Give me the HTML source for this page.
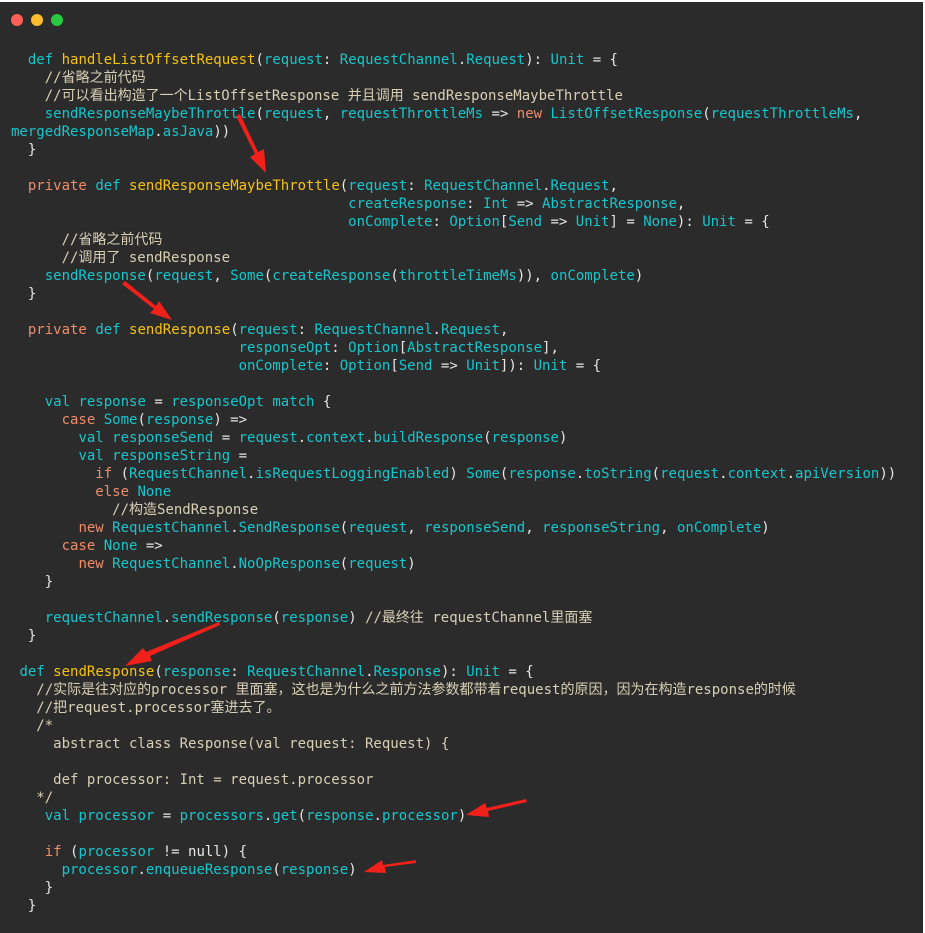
<!DOCTYPE html>
<html><head><meta charset="utf-8"><style>
html,body{margin:0;padding:0;background:#fff;}
#w{position:absolute;left:0;top:2px;width:923px;height:931px;background:#2b2b2b;overflow:hidden;}
.dot{position:absolute;top:12px;width:12px;height:12px;border-radius:50%;}
pre{position:absolute;left:11px;top:49px;margin:0;font-family:"DejaVu Sans Mono","Liberation Mono","Noto Sans CJK SC",monospace;font-size:14px;line-height:18px;color:#e6e6e6;}
.t{color:#16c6cc}.f{color:#f5c20f}.p{color:#ee8d6c}.c{color:#d8cfb4}
svg{position:absolute;left:0;top:-2px;}
</style></head><body><div id="w">
<div class="dot" style="left:11px;background:#fe5f57"></div>
<div class="dot" style="left:31px;background:#febc2e"></div>
<div class="dot" style="left:51px;background:#28c840"></div>
<pre>  <span class="t">def</span> <span class="f">handleListOffsetRequest</span>(<span class="t">request</span>: <span class="t">RequestChannel</span>.<span class="t">Request</span>): <span class="t">Unit</span> = {
    <span class="c">//省略之前代码</span>
    <span class="c">//可以看出构造了一个ListOffsetResponse 并且调用 sendResponseMaybeThrottle</span>
    <span class="t">sendResponseMaybeThrottle</span>(<span class="t">request</span>, <span class="t">requestThrottleMs</span> =&gt; <span class="p">new</span> <span class="t">ListOffsetResponse</span>(<span class="t">requestThrottleMs</span>,
<span class="t">mergedResponseMap</span>.<span class="t">asJava</span>))
  }

  <span class="p">private</span> <span class="t">def</span> <span class="f">sendResponseMaybeThrottle</span>(<span class="t">request</span>: <span class="t">RequestChannel</span>.<span class="t">Request</span>,
                                        <span class="t">createResponse</span>: <span class="t">Int</span> =&gt; <span class="t">AbstractResponse</span>,
                                        <span class="t">onComplete</span>: <span class="t">Option</span>[<span class="t">Send</span> =&gt; <span class="t">Unit</span>] = <span class="t">None</span>): <span class="t">Unit</span> = {
      <span class="c">//省略之前代码</span>
      <span class="c">//调用了 sendResponse</span>
    <span class="t">sendResponse</span>(<span class="t">request</span>, <span class="t">Some</span>(<span class="t">createResponse</span>(<span class="t">throttleTimeMs</span>)), <span class="t">onComplete</span>)
  }

  <span class="p">private</span> <span class="t">def</span> <span class="f">sendResponse</span>(<span class="t">request</span>: <span class="t">RequestChannel</span>.<span class="t">Request</span>,
                           <span class="t">responseOpt</span>: <span class="t">Option</span>[<span class="t">AbstractResponse</span>],
                           <span class="t">onComplete</span>: <span class="t">Option</span>[<span class="t">Send</span> =&gt; <span class="t">Unit</span>]): <span class="t">Unit</span> = {

    <span class="t">val</span> <span class="t">response</span> = <span class="t">responseOpt</span> <span class="t">match</span> {
      <span class="p">case</span> <span class="t">Some</span>(<span class="t">response</span>) =&gt;
        <span class="t">val</span> <span class="t">responseSend</span> = <span class="t">request</span>.<span class="t">context</span>.<span class="t">buildResponse</span>(<span class="t">response</span>)
        <span class="t">val</span> <span class="t">responseString</span> =
          <span class="p">if</span> (<span class="t">RequestChannel</span>.<span class="t">isRequestLoggingEnabled</span>) <span class="t">Some</span>(<span class="t">response</span>.<span class="t">toString</span>(<span class="t">request</span>.<span class="t">context</span>.<span class="t">apiVersion</span>))
          <span class="p">else</span> <span class="t">None</span>
            <span class="c">//构造SendResponse</span>
        <span class="p">new</span> <span class="t">RequestChannel</span>.<span class="t">SendResponse</span>(<span class="t">request</span>, <span class="t">responseSend</span>, <span class="t">responseString</span>, <span class="t">onComplete</span>)
      <span class="p">case</span> <span class="t">None</span> =&gt;
        <span class="p">new</span> <span class="t">RequestChannel</span>.<span class="t">NoOpResponse</span>(<span class="t">request</span>)
    }

    <span class="t">requestChannel</span>.<span class="t">sendResponse</span>(<span class="t">response</span>) <span class="c">//最终往 requestChannel里面塞</span>
  }

 <span class="t">def</span> <span class="f">sendResponse</span>(<span class="t">response</span>: <span class="t">RequestChannel</span>.<span class="t">Response</span>): <span class="t">Unit</span> = {
   <span class="c">//实际是往对应的processor 里面塞，这也是为什么之前方法参数都带着request的原因，因为在构造response的时候</span>
   <span class="c">//把request.processor塞进去了。</span>
   <span class="c">/*</span>
<span class="c">     abstract class Response(val request: Request) {</span>

<span class="c">     def processor: Int = request.processor</span>
<span class="c">   */</span>
    <span class="t">val</span> <span class="t">processor</span> = <span class="t">processors</span>.<span class="t">get</span>(<span class="t">response</span>.<span class="t">processor</span>)

    <span class="p">if</span> (<span class="t">processor</span> != null) {
      <span class="t">processor</span>.<span class="t">enqueueResponse</span>(<span class="t">response</span>)
    }
  }</pre>
<svg width="923" height="933" viewBox="0 0 923 933">
<g fill="#f0201a">
<polygon points="236,116 240,114 258,152 264,149 266,173 250,157 255,154"/>
<polygon points="122,284 125,281 156,306 159,301 172,320 150,313 154,309"/>
<polygon points="219,622 220,625 150,656 152,661 125,666 143,648 146,652"/>
<polygon points="526,799 527,802 488,811 489,817 466,815 485,803 487,808"/>
<polygon points="416,860 416,863 385,867 386,873 364,872 382,860 383,865"/>
</g>
</svg>
</div></body></html>
